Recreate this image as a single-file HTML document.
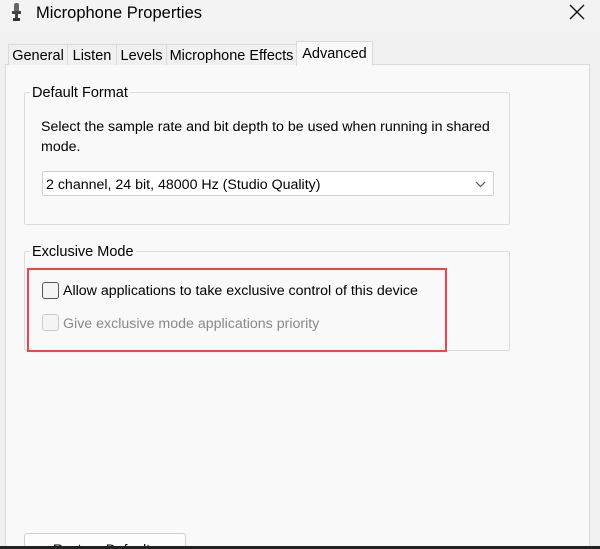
<!DOCTYPE html><html style="margin:0;width:600px;height:549px;overflow:hidden"><head><style>
body{margin:0;width:600px;height:549px;overflow:hidden;background:#f0f0f0;font-family:"Liberation Sans",sans-serif;font-size:14px;color:#000;position:relative}
.a{position:absolute}
.tab{position:absolute;top:44px;height:20px;border:1px solid #d9d9d9;border-bottom:none;background:#f0f0f0;font-size:14.5px;line-height:22px;text-align:center}
.grp{position:absolute;border:1px solid #dcdcdc;border-radius:2px}
.lg{position:absolute;background:#f9f9f9;padding:0 2px;top:-8px;left:5px;font-size:14px}
.cb{position:absolute;width:15px;height:15px;border:1px solid #555;border-radius:3px;background:#f4f4f4}
</style></head><body>
<div class="a" style="left:0;top:0;width:600px;height:32px;background:#f3f3f3"></div>
<svg class="a" style="left:12px;top:3px" width="10" height="18"><rect x="2" y="0" width="5" height="11" rx="2" fill="#666"/><rect x="0" y="8" width="9" height="3" fill="#444"/><rect x="3" y="11" width="3" height="4" fill="#444"/><rect x="1" y="15" width="7" height="3" fill="#333"/></svg>
<div class="a" style="left:36px;top:4px;font-size:16.5px">Microphone Properties</div>
<svg class="a" style="left:569px;top:4px" width="16" height="16"><path d="M1 1L15 15M15 1L1 15" stroke="#111" stroke-width="1.4"/></svg>
<div class="a" style="left:5px;top:64px;width:583px;height:482px;background:#f9f9f9;border:1px solid #dadada;border-bottom:none"></div>
<div class="tab" style="left:8px;width:58px">General</div>
<div class="tab" style="left:67px;width:48px">Listen</div>
<div class="tab" style="left:116px;width:49px">Levels</div>
<div class="tab" style="left:166px;width:129px">Microphone Effects</div>
<div class="tab" style="left:296px;top:41px;height:24px;width:75px;background:#f9f9f9;line-height:24px">Advanced</div>
<div class="grp" style="left:24px;top:92px;width:484px;height:131px"><span class="lg" style="font-size:14.5px">Default Format</span></div>
<div class="a" style="left:41px;top:117px;font-size:14.2px;line-height:20px;width:460px">Select the sample rate and bit depth to be used when running in shared mode.</div>
<div class="a" style="left:42px;top:171px;width:452px;height:25px;background:#fff;border:1px solid #d0d0d0;border-radius:2px;box-sizing:border-box;line-height:27px;padding-left:3px;font-size:14.2px">2 channel, 24 bit, 48000 Hz (Studio Quality)
<svg class="a" style="right:7px;top:9px" width="11" height="7"><path d="M1 1L5.5 5.5L10 1" stroke="#555" fill="none" stroke-width="1.2"/></svg></div>
<div class="grp" style="left:24px;top:251px;width:484px;height:98px"><span class="lg" style="font-size:14.5px">Exclusive Mode</span></div>
<div class="a" style="left:27px;top:268px;width:416px;height:80px;border:2px solid #f0444a"></div>
<div class="cb" style="left:42px;top:282px"></div>
<div class="a" style="left:63px;top:283px;font-size:14.2px">Allow applications to take exclusive control of this device</div>
<div class="cb" style="left:42px;top:314px;border-color:#ccc"></div>
<div class="a" style="left:63px;top:316px;font-size:14.2px;color:#888">Give exclusive mode applications priority</div>
<div class="a" style="left:24px;top:533px;width:160px;height:13px;overflow:hidden;border:1px solid #d0d0d0;border-bottom:none;border-radius:3px 3px 0 0;background:#fdfdfd;text-align:center;line-height:30px">Restore Defaults</div>
<div class="a" style="left:0;top:546px;width:600px;height:3px;background:#222"></div>
</body></html>
